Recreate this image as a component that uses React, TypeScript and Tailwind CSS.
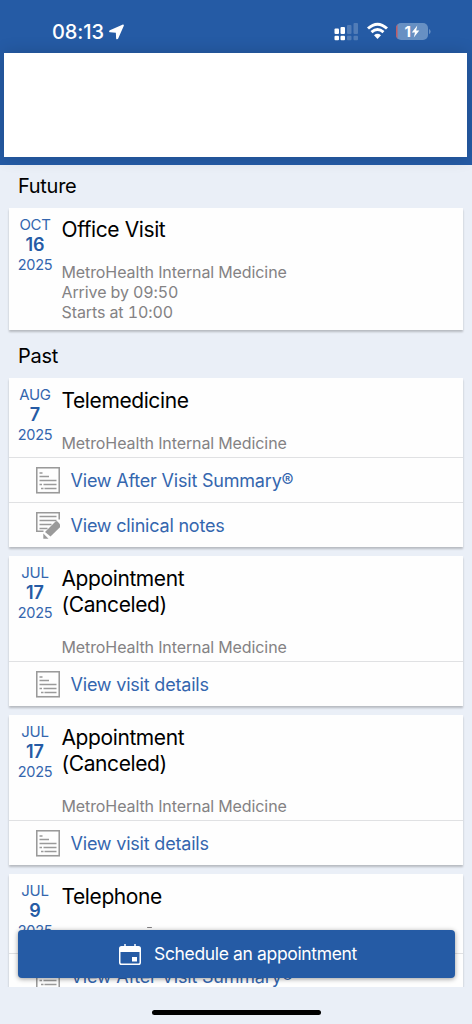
import React from "react"

type Visit = {
  month: string
  day: string
  year: string
  title: string[]
  details: string[]
  links: { label: string; icon: "summary" | "notes" }[]
}

const future: Visit[] = [
  {
    month: "OCT",
    day: "16",
    year: "2025",
    title: ["Office Visit"],
    details: ["MetroHealth Internal Medicine", "Arrive by 09:50", "Starts at 10:00"],
    links: [],
  },
]

const past: Visit[] = [
  {
    month: "AUG",
    day: "7",
    year: "2025",
    title: ["Telemedicine"],
    details: ["MetroHealth Internal Medicine"],
    links: [
      { label: "View After Visit Summary®", icon: "summary" },
      { label: "View clinical notes", icon: "notes" },
    ],
  },
  {
    month: "JUL",
    day: "17",
    year: "2025",
    title: ["Appointment", "(Canceled)"],
    details: ["MetroHealth Internal Medicine"],
    links: [{ label: "View visit details", icon: "summary" }],
  },
  {
    month: "JUL",
    day: "17",
    year: "2025",
    title: ["Appointment", "(Canceled)"],
    details: ["MetroHealth Internal Medicine"],
    links: [{ label: "View visit details", icon: "summary" }],
  },
  {
    month: "JUL",
    day: "9",
    year: "2025",
    title: ["Telephone"],
    details: [],
    links: [{ label: "View After Visit Summary®", icon: "summary" }],
  },
]

const SummaryIcon = () => (
  <svg width="24" height="27" viewBox="0 0 24 27" fill="none" stroke="#9a9a9a">
    <rect x="0.75" y="0.75" width="22.5" height="25" strokeWidth="1.6" />
    <path d="M3.5 6h3M3.5 9.5h9.5M3.5 13.5h17M3.5 17.5h2.5M7.5 17.5h13M5 21.5h2.5M8.5 21.5h12" strokeWidth="1.3" />
  </svg>
)

const NotesIcon = () => (
  <svg width="24" height="27" viewBox="0 0 24 27" fill="none" stroke="#9a9a9a">
    <path d="M7.5 19.3H0.75V0.75H23.25V7.5" strokeWidth="1.6" />
    <path d="M3.5 4.5h17M3.5 8.5h17M3.5 12.5h12M3.5 16.5h8" strokeWidth="1.4" />
    <path d="M9 20L19.5 9.5Q20.5 8.6 21.5 9.6L24 12.2V15.2L14.5 24.6Z" fill="#9a9a9a" stroke="none" />
    <path d="M7.3 21.5L12.5 26.7H7.3Z" fill="#9a9a9a" stroke="none" />
  </svg>
)

const StatusBar = () => (
  <div className="flex h-[53px] items-start text-white">
    <div className="ml-[52px] mt-[20px] flex items-center">
      <span className="w-[54px] whitespace-nowrap text-[20px] font-medium leading-6 tracking-[-0.1px]">08:13</span>
      <svg className="ml-[3px]" width="15" height="16" viewBox="0 0 16 16" fill="white">
        <path d="M14.3 0.2L0.9 6C-0.3 6.6 0 8.2 1.2 8.3L7.3 8.7L7.6 14.8C7.7 16.1 9.3 16.2 9.8 15L15.7 1.7C16.2 0.6 15.3 -0.2 14.3 0.2Z" />
      </svg>
    </div>
    <div className="ml-auto mr-[41px] mt-[22px] flex">
      <svg width="25" height="20" viewBox="0 0 25 20" fill="white">
        <rect x="0.5" y="6.5" width="4.5" height="5.5" rx="1" />
        <rect x="6.5" y="5" width="4.5" height="7" rx="1" />
        <rect x="0.5" y="13.7" width="4.5" height="4.5" rx="1" />
        <rect x="6.5" y="13.7" width="4.5" height="4.5" rx="1" />
        <g opacity="0.2">
          <rect x="13" y="3" width="4.5" height="9" rx="1" />
          <rect x="19.5" y="1" width="4.5" height="11" rx="1" />
          <rect x="13" y="13.7" width="4.5" height="4.5" rx="1" />
          <rect x="19.5" y="13.7" width="4.5" height="4.5" rx="1" />
        </g>
      </svg>
      <svg className="ml-2" width="21" height="18" viewBox="0 0 21 18" fill="none" stroke="white">
        <path d="M1 6.5Q10.5 -2.1 20 6.5" strokeWidth="3" />
        <path d="M4.5 10.2Q10.5 5 16.5 10.2" strokeWidth="2.9" />
        <path d="M7 13.2Q10.5 10.3 14 13.2L10.5 17Z" fill="white" stroke="none" />
      </svg>
      <svg className="ml-2" width="35" height="18" viewBox="0 0 35 18">
        <defs>
          <clipPath id="battery">
            <rect x="0" y="1" width="32" height="17" rx="5" />
          </clipPath>
        </defs>
        <rect x="0" y="1" width="32" height="17" rx="5" fill="#6790c3" />
        <rect x="0" y="1" width="1.5" height="17" fill="#c25b63" clipPath="url(#battery)" />
        <path d="M33 7Q34.6 7.5 34.6 9.5T33 12Z" fill="#6790c3" />
        <text x="8.5" y="15" fill="white" fontSize="15" fontWeight="700">1</text>
        <path d="M21.3 3.5L15.8 10.5H19L17.8 15.5L23.3 8.5H20.2Z" fill="white" />
      </svg>
    </div>
  </div>
)

const VisitCard = ({ visit }: { visit: Visit }) => (
  <article className="bg-[#fefefe] shadow-[0_2px_2px_rgba(0,0,0,0.22)]">
    <div className="flex">
      <div className="w-[52px] shrink-0 pt-[7px] text-center text-[15px] leading-5 text-[#3466ae]">
        <div className="tracking-[-0.3px]">{visit.month}</div>
        <div className="text-[18px] font-semibold text-[#255ba5]">{visit.day}</div>
        <div className="text-[14.5px] tracking-[-0.3px]">{visit.year}</div>
      </div>
      <div className="pl-[0.5px] pt-[9.5px]">
        <h3 className="text-[21px] leading-[26px] tracking-[-0.4px] text-black">
          {visit.title.map((line) => (
            <span key={line} className="block">{line}</span>
          ))}
        </h3>
        <div className={visit.links.length ? "mt-[19px] min-h-[24.5px] pb-[4.5px]" : "mt-[18.5px] pb-[8.5px]"}>
          {visit.details.map((line) => (
            <p key={line} className="text-[16px] leading-5 tracking-[-0.1px] tabular-nums text-[#848284]">{line}</p>
          ))}
        </div>
      </div>
    </div>
    {visit.links.map((link) => (
      <a key={link.label} className="flex h-[45px] items-center border-t border-[#e0e1e3] pl-[27px] text-[#3466ae]">
        {link.icon === "notes" ? <NotesIcon /> : <SummaryIcon />}
        <span className="ml-[10.5px] pt-px text-[18px] leading-6 tracking-[-0.2px]">{link.label}</span>
      </a>
    ))}
  </article>
)

const App = () => {
  return (
    <div className="relative h-[1024px] w-[472px] overflow-hidden bg-[#eaeff7] font-['Inter',sans-serif]">
      <header className="h-[164.5px] bg-[#255ba5]">
        <StatusBar />
        <div className="ml-1 h-[104px] w-[463px] bg-white shadow-[0_0_16px_rgba(0,0,0,0.16)]" />
      </header>
      <main className="h-[822px] overflow-hidden px-[9px]">
        <h2 className="h-[43px] pl-[9px] pt-[8px] text-[20px] leading-[26px] tracking-[-0.3px]">Future</h2>
        {future.map((visit, i) => (
          <VisitCard key={i} visit={visit} />
        ))}
        <h2 className="h-[48px] pl-[9px] pt-[13px] text-[20px] leading-[26px] tracking-[-0.3px]">Past</h2>
        <div className="flex flex-col gap-[9px]">
          {past.map((visit, i) => (
            <VisitCard key={i} visit={visit} />
          ))}
        </div>
      </main>
      <div className="absolute left-[147px] top-[927px] h-px w-[5px] rounded-full bg-[#848284]" />
      <button className="absolute left-[18px] top-[930px] flex h-[48px] w-[437px] items-center rounded bg-[#255ba5] pl-[101px] text-white shadow-[0_1px_5px_rgba(0,0,0,0.4)]">
        <svg width="22" height="21" viewBox="0 0 22 21" fill="none" stroke="white">
          <rect x="0.75" y="2.75" width="20.5" height="17.5" rx="1.8" strokeWidth="1.5" />
          <path d="M1 3h20v5H1z" fill="white" stroke="none" />
          <path d="M6 0v4M16 0v4" strokeWidth="1.5" />
          <rect x="13" y="13" width="5" height="4.5" fill="white" stroke="none" />
        </svg>
        <span className="ml-[13px] text-[17.5px] tracking-[-0.35px]">Schedule an appointment</span>
      </button>
      <div className="absolute left-[152px] top-[1010px] h-[5px] w-[169px] rounded-full bg-black" />
    </div>
  )
}

export default App
